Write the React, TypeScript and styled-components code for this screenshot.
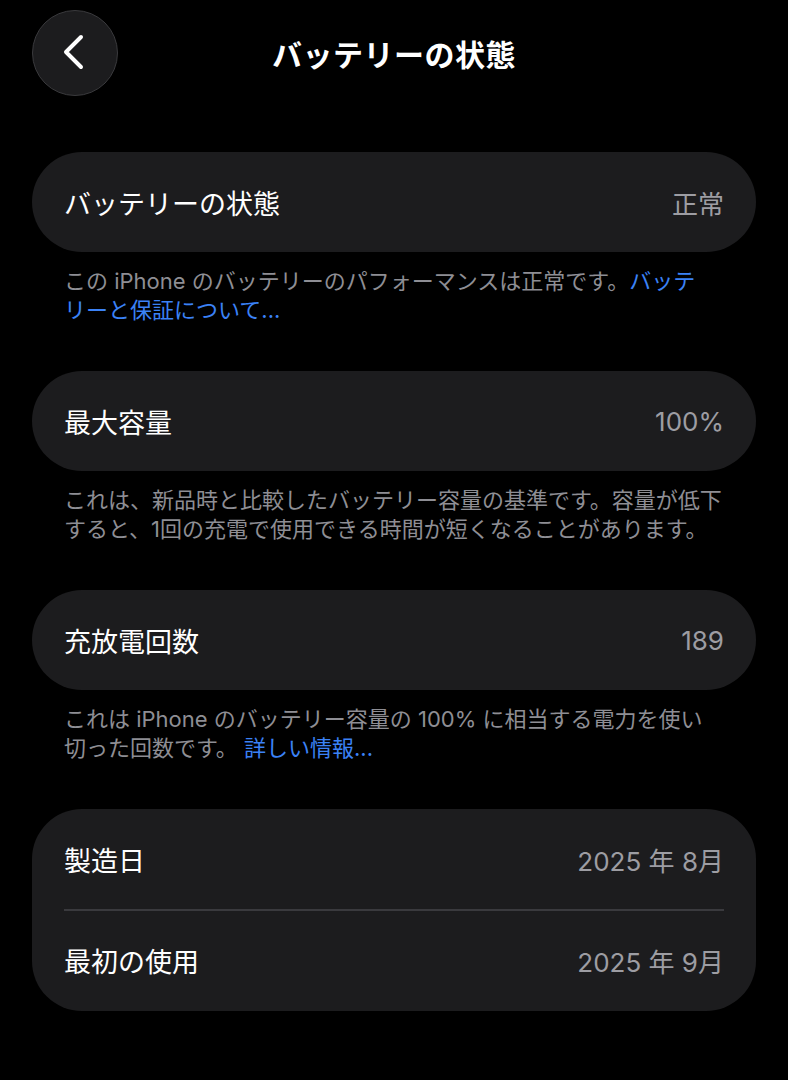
import React from "react";
import styled, { createGlobalStyle } from "styled-components";

const GlobalStyle = createGlobalStyle`
  html, body {
    margin: 0;
    padding: 0;
    background: #000000;
  }
  body {
    font-family: "Inter", "Noto Sans CJK JP", sans-serif;
    color: #ffffff;
    -webkit-font-smoothing: antialiased;
  }
`;

const Page = styled.div`
  width: 788px;
  min-height: 1080px;
  background: #000000;
  display: flex;
  flex-direction: column;
  box-sizing: border-box;
  padding: 10px 32px 0 32px;
`;

const Header = styled.header`
  position: relative;
  height: 86px;
  display: flex;
  align-items: center;
  justify-content: center;
  margin-bottom: 56px;
`;

const BackButton = styled.button`
  position: absolute;
  left: 0;
  top: 0;
  width: 86px;
  height: 86px;
  border-radius: 50%;
  background: #1c1c1e;
  border: 1.5px solid #3a3a3d;
  box-sizing: border-box;
  display: flex;
  align-items: center;
  justify-content: center;
  padding: 0;
  cursor: pointer;
`;

const Title = styled.h1`
  margin: 0;
  font-family: "Noto Sans CJK JP", sans-serif;
  font-size: 30px;
  font-weight: 700;
  color: #ffffff;
  letter-spacing: 0.5px;
`;

const Section = styled.section<{ $gap?: number }>`
  display: flex;
  flex-direction: column;
  margin-bottom: ${(p) => p.$gap ?? 46}px;
`;

const Card = styled.div`
  background: #1c1c1e;
  border-radius: 50px;
  display: flex;
  flex-direction: column;
  padding: 0 32px;
`;

const Row = styled.div`
  height: 100px;
  display: flex;
  align-items: center;
  justify-content: space-between;
`;

const Divider = styled.div`
  height: 1.5px;
  background: #3a3a3e;
`;

const Label = styled.span`
  font-family: "Noto Sans CJK JP", sans-serif;
  font-size: 27px;
  font-weight: 400;
  color: #ffffff;
`;

const Value = styled.span`
  font-family: "Inter", "Noto Sans CJK JP", sans-serif;
  font-size: 26px;
  font-weight: 400;
  color: #9d9da3;
`;

const Footer = styled.p`
  margin: 15px 0 0 0;
  padding: 0 32px;
  font-family: "Inter", "Noto Sans CJK JP", sans-serif;
  font-size: 22px;
  line-height: 29px;
  color: #8e8e94;
  white-space: nowrap;
`;

const Link = styled.a`
  color: #3b82f6;
  text-decoration: none;
`;

const Chevron = () => (
  <svg width="40" height="40" viewBox="0 0 40 40" fill="none">
    <path
      d="M26 4 L11 19 L26 34"
      stroke="#ffffff"
      strokeWidth="4"
      strokeLinecap="round"
      strokeLinejoin="round"
    />
  </svg>
);

export default function App() {
  return (
    <>
      <GlobalStyle />
      <Page>
        <Header>
          <BackButton aria-label="戻る">
            <Chevron />
          </BackButton>
          <Title>バッテリーの状態</Title>
        </Header>

        <Section>
          <Card>
            <Row>
              <Label>バッテリーの状態</Label>
              <Value>正常</Value>
            </Row>
          </Card>
          <Footer>
            この iPhone のバッテリーのパフォーマンスは正常です。<Link>バッテ</Link>
            <br />
            <Link>リーと保証について...</Link>
          </Footer>
        </Section>

        <Section>
          <Card>
            <Row>
              <Label>最大容量</Label>
              <Value>100%</Value>
            </Row>
          </Card>
          <Footer>
            これは、新品時と比較したバッテリー容量の基準です。容量が低下
            <br />
            すると、1回の充電で使用できる時間が短くなることがあります。
          </Footer>
        </Section>

        <Section>
          <Card>
            <Row>
              <Label>充放電回数</Label>
              <Value>189</Value>
            </Row>
          </Card>
          <Footer>
            これは iPhone のバッテリー容量の 100% に相当する電力を使い
            <br />
            切った回数です。 <Link>詳しい情報...</Link>
          </Footer>
        </Section>

        <Section>
          <Card>
            <Row>
              <Label>製造日</Label>
              <Value>2025 年 8月</Value>
            </Row>
            <Divider />
            <Row>
              <Label>最初の使用</Label>
              <Value>2025 年 9月</Value>
            </Row>
          </Card>
        </Section>
      </Page>
    </>
  );
}
